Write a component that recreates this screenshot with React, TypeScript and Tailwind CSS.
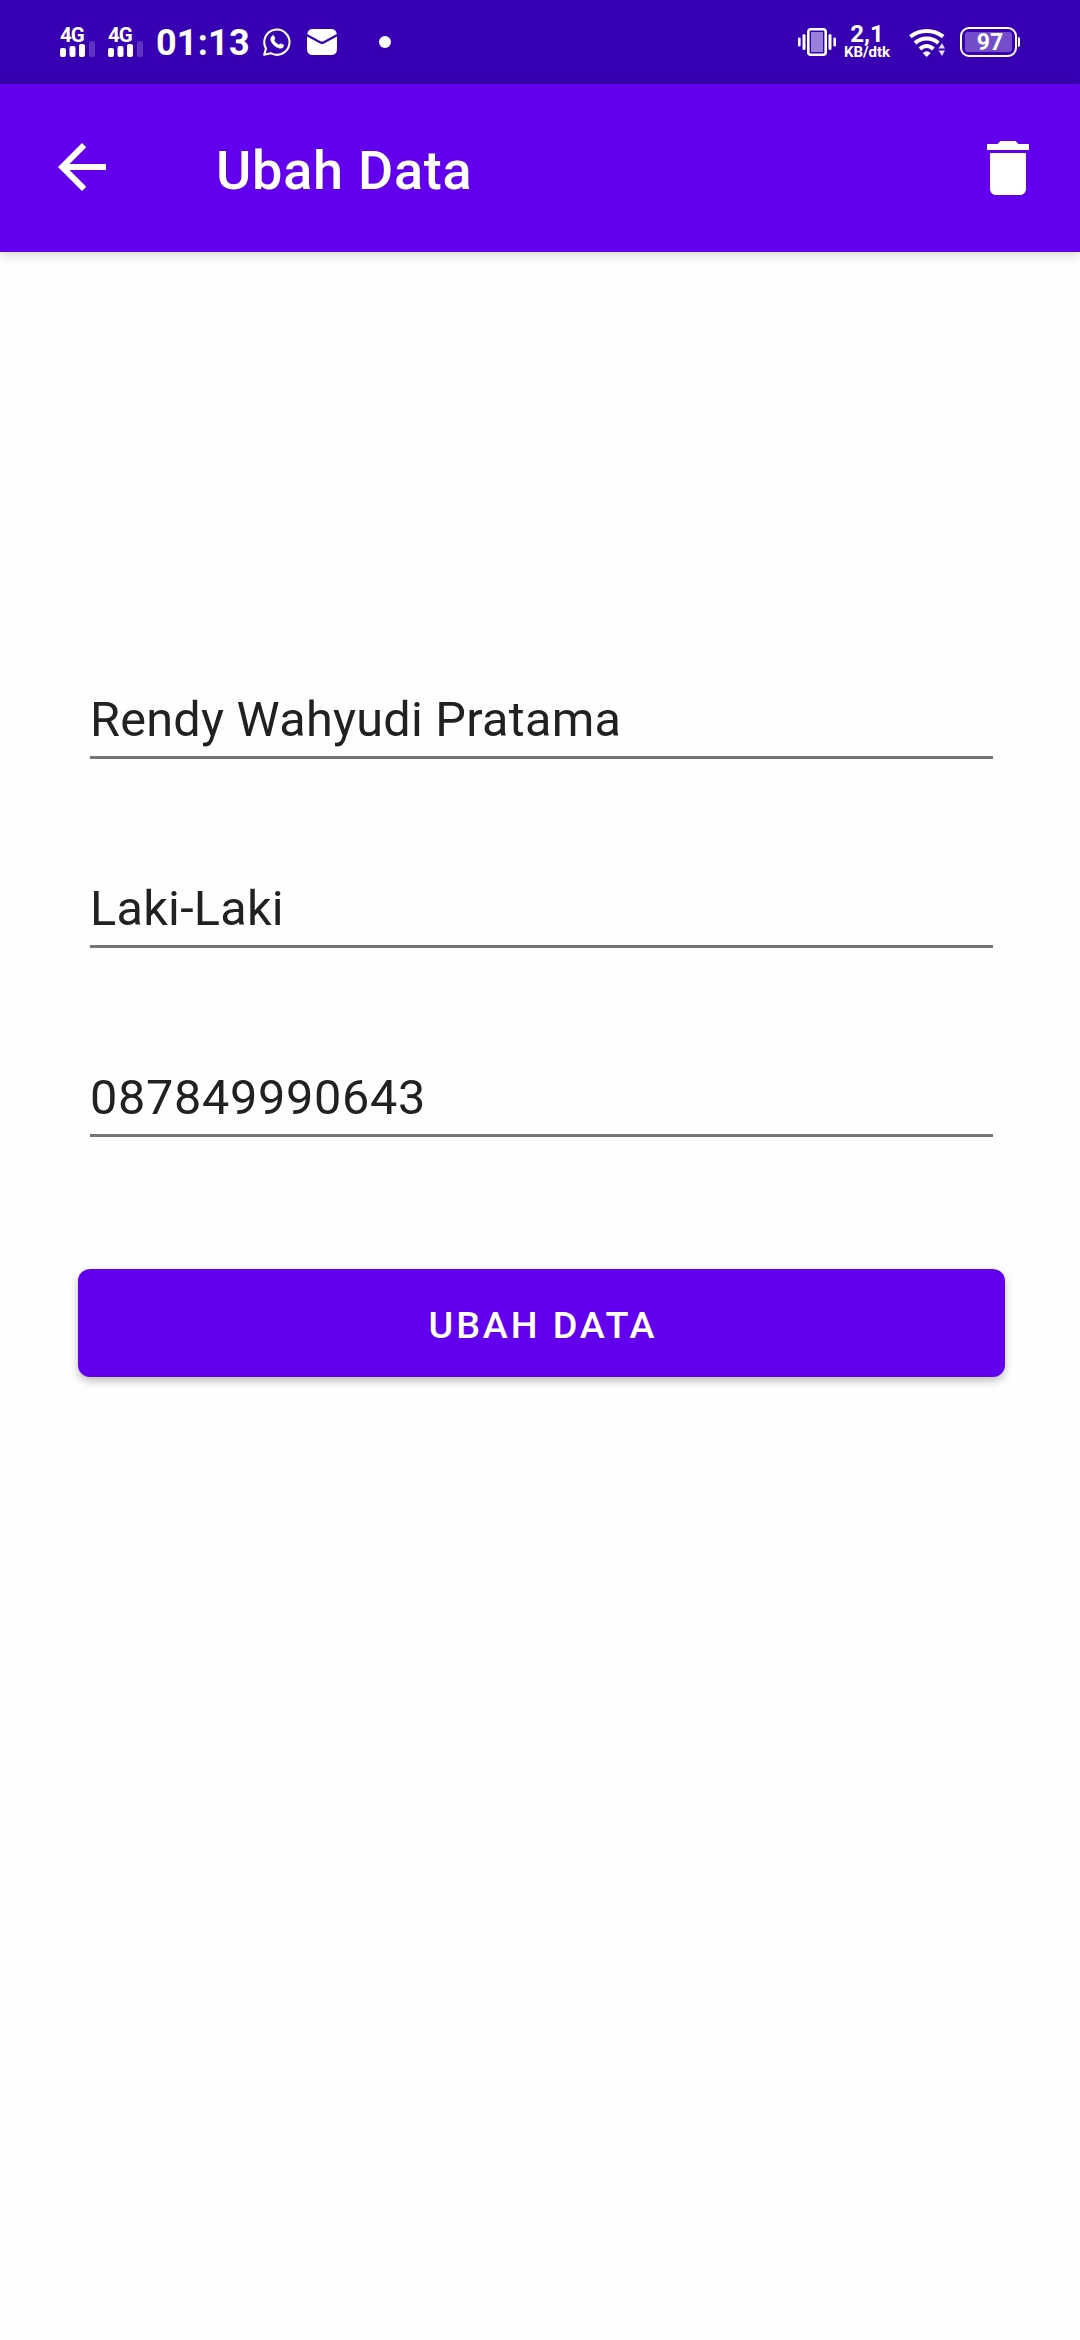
import React from "react";

function Signal() {
  return (
    <div className="flex h-[31px] w-[35px] flex-col">
      <span className="h-[16px] text-[20.5px] leading-[16px] font-bold tracking-[-1px]">4G</span>
      <svg className="-mt-[3px] h-[17px] w-[35px]" viewBox="0 0 35 17" fill="white">
        <rect x="0" y="8" width="6" height="9" rx="2" />
        <rect x="9.5" y="6" width="6" height="11" rx="2" />
        <rect x="19" y="4" width="6" height="13" rx="2" />
        <rect x="29" y="1" width="6" height="16" rx="2" opacity="0.2" />
      </svg>
    </div>
  );
}

function WhatsApp() {
  return (
    <svg className="h-[28px] w-[28px]" viewBox="0 0 28 28" fill="none">
      <path d="M1.2 26.7 3 20.5A12.6 12.6 0 1 1 7.8 25.2Z" stroke="white" strokeWidth="2.1" strokeLinejoin="round" />
      <path d="M9.4 7.6c.7-.5 1.4-.4 1.8.4l1 2.2c.3.7-.9 1.6-.9 2.1 1 2.1 2.6 3.5 4.6 4.3.6.1 1.3-1.3 2-1.2l2.5 1.2c.8.4.7 1.3.2 2.1-1 1.7-3 2.2-4.9 1.5-4-1.3-6.6-3.9-8-7.4-.7-2 .2-4.2 1.7-5.2Z" fill="white" />
    </svg>
  );
}

function Mail() {
  return (
    <svg className="h-[26px] w-[30px]" viewBox="0 0 30 26">
      <path d="M0 7.5 13 14.6q2 1 4 0L30 7.5V20q0 6-6 6H6q-6 0-6-6Z" fill="white" />
      <path d="M.2 5Q1 0 6 0h18q5 0 5.8 5L16.5 12.2q-1.5.8-3 0Z" fill="white" />
    </svg>
  );
}

function Vibrate() {
  return (
    <svg className="h-[28px] w-[38px]" viewBox="0 0 38 28" fill="white">
      <rect x="0" y="9.5" width="2.6" height="9" rx="1.3" />
      <rect x="4.5" y="6" width="3" height="16" rx="1.5" />
      <rect x="10.3" y="1.3" width="17.4" height="25.4" rx="2.5" fill="none" stroke="white" strokeWidth="2.6" />
      <rect x="13" y="4" width="12" height="20" opacity="0.5" />
      <rect x="30.5" y="6" width="3" height="16" rx="1.5" />
      <rect x="35.4" y="9.5" width="2.6" height="9" rx="1.3" />
    </svg>
  );
}

function Wifi() {
  return (
    <svg className="h-[28px] w-[36px]" viewBox="0 0 36 28" fill="none">
      <g stroke="white" strokeWidth="4">
        <path d="M1.3 7.7Q8.500 2 17.700 2t16.500 5.700" />
        <path d="M6 14Q11.200 9.500 17.700 9.500T29.400 14" />
        <path d="M11 20Q14.200 17 17.700 17t6.700 3" />
      </g>
      <path d="M13.700 24q4-3.500 8 0l-4 4Z" fill="white" />
      <path d="M29.500 19.500 33 14 36 19.500ZM29.500 21.500H36L33 27Z" fill="white" opacity="0.85" />
    </svg>
  );
}

function Battery() {
  return (
    <div className="flex items-center gap-px">
      <div className="flex h-[30px] w-[57px] rounded-[9px] border-2 border-white p-[3px]">
        <div className="flex w-[47px] items-center justify-center rounded-[3px] bg-white/30 pl-[3px] text-[23px] leading-none font-bold">
          97
        </div>
      </div>
      <div className="h-[10px] w-[2px] rounded-r-sm bg-white" />
    </div>
  );
}

function StatusBar() {
  return (
    <div className="flex h-[84px] items-start justify-between bg-[#3700b3] px-[60px]">
      <div className="flex">
        <div className="mt-[27px] flex gap-[13px]">
          <Signal />
          <Signal />
        </div>
        <span className="mt-[25px] ml-[13px] w-[93px] text-[36px] leading-[37px] font-bold tracking-[0.2px]">01:13</span>
        <div className="mt-[28px] ml-[14px]">
          <WhatsApp />
        </div>
        <div className="mt-[29px] ml-[16px]">
          <Mail />
        </div>
        <div className="mt-[36px] ml-[42px] h-[12px] w-[12px] rounded-full bg-white" />
      </div>
      <div className="flex">
        <div className="mt-[28px]">
          <Vibrate />
        </div>
        <div className="mt-[24px] ml-[8px] flex w-[46px] flex-col items-center font-bold">
          <span className="text-[24px] leading-[20px]">2,1</span>
          <span className="text-[15px] leading-[17px]">KB/dtk</span>
        </div>
        <div className="mt-[29px] ml-[19px]">
          <Wifi />
        </div>
        <div className="mt-[27px] ml-[15px]">
          <Battery />
        </div>
      </div>
    </div>
  );
}

function Field({ value, tracking = "tracking-[0.27px]" }: { value: string; tracking?: string }) {
  return (
    <div className="flex h-[99px] flex-col justify-end border-b-3 border-[#757575] pb-[8px]">
      <span className={`text-[48.6px] leading-[57px] whitespace-nowrap text-[#212121] ${tracking}`}>{value}</span>
    </div>
  );
}

export default function App() {
  return (
    <div className="flex h-[2340px] w-[1080px] flex-col overflow-hidden bg-[#fefefe] font-[Roboto,sans-serif] text-white">
      <StatusBar />
      <header className="flex h-[168px] shrink-0 items-center bg-[#6200ee] pr-[36px] pl-[46px] shadow-[0_3px_12px_rgba(0,0,0,0.16)]">
        <svg className="mb-[2px] h-[72px] w-[72px]" viewBox="0 0 24 24" fill="white">
          <path d="M20 11H7.83l5.59-5.59L12 4l-8 8 8 8 1.41-1.41L7.83 13H20v-2Z" />
        </svg>
        <h1 className="mt-[5px] ml-[98px] flex-1 text-[54px] leading-none font-medium tracking-[0.75px]">Ubah Data</h1>
        <svg className="h-[72px] w-[72px]" viewBox="0 0 24 24" fill="white">
          <path d="M6 19c0 1.1.9 2 2 2h8c1.1 0 2-.9 2-2V7H6v12ZM19 4h-3.5l-1-1h-5l-1 1H5v2h14V4Z" />
        </svg>
      </header>
      <main className="flex flex-col pt-[408px] pr-[75px] pl-[78px]">
        <div className="flex flex-col gap-[90px] px-[12px]">
          <Field value="Rendy Wahyudi Pratama" />
          <Field value="Laki-Laki" />
          <Field value="087849990643" tracking="tracking-[0.7px]" />
        </div>
        <button className="mt-[132px] h-[108px] rounded-[12px] bg-[#6200ee] pt-[4px] pl-[3px] text-[37.8px] font-medium tracking-[2.85px] shadow-[0_4px_8px_rgba(0,0,0,0.25)]">
          UBAH DATA
        </button>
      </main>
    </div>
  );
}
